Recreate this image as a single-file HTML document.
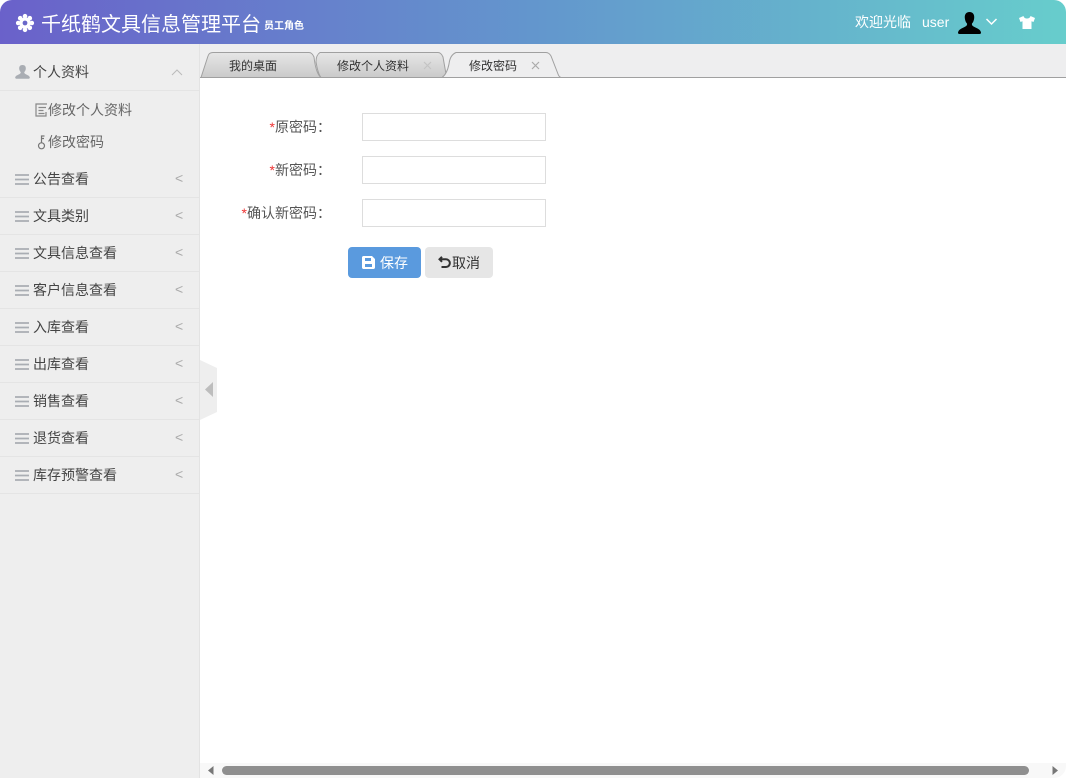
<!DOCTYPE html>
<html lang="zh-CN"><head><meta charset="utf-8"><title>修改密码</title>
<style>
*{box-sizing:border-box}
html,body{margin:0;padding:0;width:1066px;height:778px;overflow:hidden;background:#fff}
body{font-family:"Liberation Sans","Noto Sans CJK SC",sans-serif;font-size:14px;color:#444;position:relative}
.a{position:absolute;white-space:nowrap;line-height:20px}
#hd{position:absolute;left:0;top:0;width:1066px;height:44px;background:linear-gradient(90deg,#6a61ca 0%,#6396cd 50%,#67cdcc 100%);border-radius:12px 12px 0 0}
#side{position:absolute;left:0;top:44px;width:200px;height:734px;background:#eeeeee;border-right:1px solid #e3e3e3}
.ln{position:absolute;left:0;width:199px;height:1px;background:#e4e4e4}
.m{color:#444}
.s{color:#666}
.ar{color:#aaa;font-size:14px}
#tabs{position:absolute;left:200px;top:44px;width:866px;height:34px;background:#eeeeef}
</style></head><body>
<div id="hd"></div>
<svg class="a" style="left:15px;top:13px" width="20" height="20" viewBox="0 0 20 20"><g fill="#fff"><circle cx="10" cy="10" r="5.500"/><circle cx="10" cy="3.200" r="2.300"/><circle cx="10" cy="16.800" r="2.300"/><circle cx="3.200" cy="10" r="2.300"/><circle cx="16.800" cy="10" r="2.300"/><circle cx="5.200" cy="5.200" r="2.300"/><circle cx="14.800" cy="5.200" r="2.300"/><circle cx="5.200" cy="14.800" r="2.300"/><circle cx="14.800" cy="14.800" r="2.300"/></g><circle cx="10" cy="10" r="2.400" fill="#6a68c9"/></svg>
<div class="a" style="left:41px;top:12px;font-size:20px;line-height:26px;color:#fff">千纸鹤文具信息管理平台</div>
<div class="a" style="left:264px;top:17px;font-size:10px;color:#fff;font-weight:700">员工角色</div>
<div class="a" style="left:855px;top:12px;font-size:14px;color:#fff">欢迎光临</div>
<div class="a" style="left:922px;top:12px;font-size:14px;color:#fff">user</div>
<svg class="a" style="left:957px;top:11px" width="25" height="24" viewBox="0 0 25 24"><path d="M12.500 1C9 1 7.500 3.500 7.800 7c.2 2.500 1.200 4.500 2.200 5.500.4 1.500-.5 2.500-2.500 3.500C5 17.200 1.500 18.500 1 21.500c-.1 1 .5 1.500 1.500 1.500h20c1 0 1.600-.5 1.500-1.500-.5-3-4-4.300-6.500-5.500-2-1-2.900-2-2.500-3.500 1-1 2-3 2.200-5.500.3-3.500-1.200-6-4.700-6z" fill="#000"/></svg>
<svg class="a" style="left:985px;top:17px" width="13" height="10" viewBox="0 0 13 10"><path d="M1.500 2l5 5 5-5" fill="none" stroke="#fff" stroke-width="1.500"/></svg>
<svg class="a" style="left:1018px;top:15px" width="18" height="15" viewBox="0 0 18 15"><path d="M5.500 1L1 3l1.500 4 2-.7V14h9V6.300l2 .7L17 3l-4.500-2C12 3 10.500 3.500 9 3.500S6 3 5.500 1z" fill="#fff"/></svg>

<div id="side">
<div class="ln" style="top:46px"></div>
<div class="ln" style="top:153px"></div>
<div class="ln" style="top:190px"></div>
<div class="ln" style="top:227px"></div>
<div class="ln" style="top:264px"></div>
<div class="ln" style="top:301px"></div>
<div class="ln" style="top:338px"></div>
<div class="ln" style="top:375px"></div>
<div class="ln" style="top:412px"></div>
<div class="ln" style="top:449px"></div>
</div>
<svg class="a" style="left:15px;top:65px" width="15" height="14" viewBox="0 0 15 14"><path d="M7.500 0C5 0 4 1.700 4.200 3.800c.1 1.500.9 2.700 1.500 3.300.2.900-.3 1.500-1.500 2.100C3 9.900.6 10.500.2 12.300c-.1.900.3 1.400 1 1.400h12.600c.7 0 1.100-.5 1-1.400-.4-1.800-2.800-2.400-4-3.100-1.200-.6-1.700-1.200-1.500-2.100.6-.6 1.400-1.800 1.500-3.300C11 1.700 10 0 7.500 0z" fill="#a9adb3"/></svg>
<div class="a m" style="left:33px;top:62px">个人资料</div>
<svg class="a" style="left:171px;top:68px" width="12" height="8" viewBox="0 0 12 8"><path d="M1 7l5-5 5 5" fill="none" stroke="#bbb" stroke-width="1"/></svg>
<svg class="a" style="left:35px;top:103px" width="13" height="14" viewBox="0 0 13 14"><path d="M12 1H1v12h10V9M3.500 4.500h7.500M3.500 7.500h5M3.500 10.500h6" fill="none" stroke="#888" stroke-width="1.200"/></svg>
<div class="a s" style="left:48px;top:100px">修改个人资料</div>
<svg class="a" style="left:37px;top:135px" width="10" height="15" viewBox="0 0 10 15"><circle cx="4.500" cy="10.800" r="3" fill="none" stroke="#777" stroke-width="1.200"/><path d="M4.500 7.800V1h3M4.500 3.500h2.500" fill="none" stroke="#777" stroke-width="1.200"/></svg>
<div class="a s" style="left:48px;top:132px">修改密码</div>

<svg class="a" style="left:15px;top:174px" width="14" height="11" viewBox="0 0 14 11"><path d="M0 1h14M0 5.500h14M0 10h14" stroke="#a9adb3" stroke-width="1.800"/></svg><div class="a m" style="left:33px;top:169px">公告查看</div><div class="a ar" style="left:175px;top:168px">&lt;</div>
<svg class="a" style="left:15px;top:211px" width="14" height="11" viewBox="0 0 14 11"><path d="M0 1h14M0 5.500h14M0 10h14" stroke="#a9adb3" stroke-width="1.800"/></svg><div class="a m" style="left:33px;top:206px">文具类别</div><div class="a ar" style="left:175px;top:205px">&lt;</div>
<svg class="a" style="left:15px;top:248px" width="14" height="11" viewBox="0 0 14 11"><path d="M0 1h14M0 5.500h14M0 10h14" stroke="#a9adb3" stroke-width="1.800"/></svg><div class="a m" style="left:33px;top:243px">文具信息查看</div><div class="a ar" style="left:175px;top:242px">&lt;</div>
<svg class="a" style="left:15px;top:285px" width="14" height="11" viewBox="0 0 14 11"><path d="M0 1h14M0 5.500h14M0 10h14" stroke="#a9adb3" stroke-width="1.800"/></svg><div class="a m" style="left:33px;top:280px">客户信息查看</div><div class="a ar" style="left:175px;top:279px">&lt;</div>
<svg class="a" style="left:15px;top:322px" width="14" height="11" viewBox="0 0 14 11"><path d="M0 1h14M0 5.500h14M0 10h14" stroke="#a9adb3" stroke-width="1.800"/></svg><div class="a m" style="left:33px;top:317px">入库查看</div><div class="a ar" style="left:175px;top:316px">&lt;</div>
<svg class="a" style="left:15px;top:359px" width="14" height="11" viewBox="0 0 14 11"><path d="M0 1h14M0 5.500h14M0 10h14" stroke="#a9adb3" stroke-width="1.800"/></svg><div class="a m" style="left:33px;top:354px">出库查看</div><div class="a ar" style="left:175px;top:353px">&lt;</div>
<svg class="a" style="left:15px;top:396px" width="14" height="11" viewBox="0 0 14 11"><path d="M0 1h14M0 5.500h14M0 10h14" stroke="#a9adb3" stroke-width="1.800"/></svg><div class="a m" style="left:33px;top:391px">销售查看</div><div class="a ar" style="left:175px;top:390px">&lt;</div>
<svg class="a" style="left:15px;top:433px" width="14" height="11" viewBox="0 0 14 11"><path d="M0 1h14M0 5.500h14M0 10h14" stroke="#a9adb3" stroke-width="1.800"/></svg><div class="a m" style="left:33px;top:428px">退货查看</div><div class="a ar" style="left:175px;top:427px">&lt;</div>
<svg class="a" style="left:15px;top:470px" width="14" height="11" viewBox="0 0 14 11"><path d="M0 1h14M0 5.500h14M0 10h14" stroke="#a9adb3" stroke-width="1.800"/></svg><div class="a m" style="left:33px;top:465px">库存预警查看</div><div class="a ar" style="left:175px;top:464px">&lt;</div>

<svg class="a" style="left:200px;top:360px" width="18" height="60" viewBox="0 0 18 60"><path d="M0 0L17 8V52L0 60z" fill="#eeeeee"/><path d="M13 22L5 29.500 13 37z" fill="#bdbdbd"/></svg>

<div id="tabs"></div>
<svg class="a" style="left:200px;top:50px" width="366" height="29" viewBox="0 0 366 29">
<defs><linearGradient id="g" x1="0" y1="0" x2="0" y2="1"><stop offset="0" stop-color="#e6e6e6"/><stop offset="1" stop-color="#cacaca"/></linearGradient></defs>
<path d="M1 27.500L8 6Q9 2.500 13 2.500H109Q112 2.500 114 7Q116 24 121 27.500z" fill="url(#g)" stroke="#a0a0a0"/>
<path d="M120 2.500H238Q241 2.500 243 7L246 24L248 27.500H121Q118 24 116 12Q116 5 120 2.500z" fill="url(#g)" stroke="#a0a0a0"/>
<path d="M242 27.500Q247 24 249 14Q250 5 256 2.500H346Q349 2.500 351 6L358 24Q359 27 361 27.500z" fill="#eeeeef" stroke="#a0a0a0"/>
<path d="M0 27.500H242" stroke="#a0a0a0"/>
</svg>
<div class="a" style="left:561px;top:77px;width:505px;height:1px;background:#a0a0a0"></div>
<div class="a" style="left:229px;top:56px;font-size:12px;color:#333">我的桌面</div>
<div class="a" style="left:337px;top:56px;font-size:12px;color:#333">修改个人资料</div>
<div class="a" style="left:469px;top:56px;font-size:12px;color:#333">修改密码</div>
<svg class="a" style="left:423px;top:61px" width="9" height="9" viewBox="0 0 9 9"><path d="M1 1l7 7M8 1L1 8" stroke="#c4c4c4" stroke-width="1.200"/></svg>
<svg class="a" style="left:531px;top:61px" width="9" height="9" viewBox="0 0 9 9"><path d="M1 1l7 7M8 1L1 8" stroke="#aaa" stroke-width="1.200"/></svg>

<div class="a" style="left:200px;top:117px;width:131px;text-align:right;color:#555"><span style="color:#e33">*</span>原密码：</div>
<div class="a" style="left:200px;top:160px;width:131px;text-align:right;color:#555"><span style="color:#e33">*</span>新密码：</div>
<div class="a" style="left:200px;top:203px;width:131px;text-align:right;color:#555"><span style="color:#e33">*</span>确认新密码：</div>
<div class="a" style="left:362px;top:113px;width:184px;height:28px;border:1px solid #ddd"></div>
<div class="a" style="left:362px;top:156px;width:184px;height:28px;border:1px solid #ddd"></div>
<div class="a" style="left:362px;top:199px;width:184px;height:28px;border:1px solid #ddd"></div>

<div class="a" style="left:348px;top:247px;width:73px;height:31px;background:#5a9ade;border-radius:4px"></div>
<svg class="a" style="left:362px;top:256px" width="13" height="13" viewBox="0 0 13 13"><path d="M1.500 0H10l3 3v8.500c0 .8-.7 1.500-1.500 1.500h-10C.7 13 0 12.300 0 11.500v-10C0 .7.700 0 1.500 0zM3 2v3h6V2zM3 8v3h7V8z" fill="#fff" fill-rule="evenodd"/></svg>
<div class="a" style="left:380px;top:253px;color:#fff">保存</div>
<div class="a" style="left:425px;top:247px;width:68px;height:31px;background:#e6e6e6;border-radius:4px"></div>
<svg class="a" style="left:438px;top:256px" width="13" height="13" viewBox="0 0 13 13"><path d="M4 .8L1.500 3.300 4 5.800M1.800 3.300H8a3.800 3.800 0 0 1 0 7.700H3.500" fill="none" stroke="#333" stroke-width="2"/></svg>
<div class="a" style="left:452px;top:253px;color:#333">取消</div>

<div class="a" style="left:200px;top:763px;width:866px;height:15px;background:#f8f8f8;border-radius:0 0 12px 0"></div>
<div class="a" style="left:222px;top:766px;width:807px;height:9px;background:#8f8f8f;border-radius:5px"></div>
<svg class="a" style="left:208px;top:766px" width="6" height="9" viewBox="0 0 6 9"><path d="M5.500 0v9L0 4.500z" fill="#777"/></svg>
<svg class="a" style="left:1052px;top:766px" width="6" height="9" viewBox="0 0 6 9"><path d="M.5 0v9L6 4.500z" fill="#777"/></svg>
</body></html>
